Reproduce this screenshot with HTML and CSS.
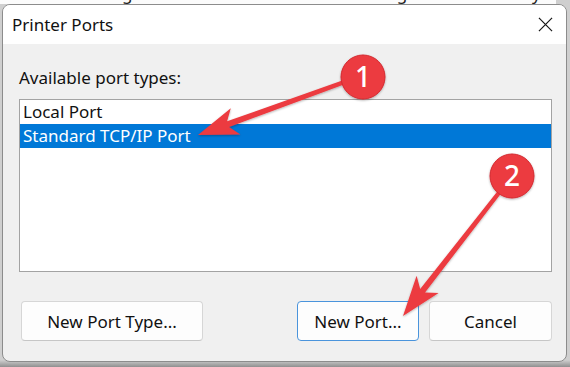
FILE: index.html
```html
<!DOCTYPE html>
<html lang="en">
<head>
    <meta charset="UTF-8">
    <title>Printer Ports</title>
    <link rel="stylesheet" href="styles.css">
</head>
<body>
    <div class="behind">
        <div class="tabs">
            <span class="tab t-general">General</span>
            <span class="tab t-sharing">Sharing</span>
            <span class="tab t-advanced">Advanced</span>
            <span class="tab t-color">Color Management</span>
            <span class="tab t-security">Security</span>
        </div>
    </div>

    <div class="dialog">
        <div class="titlebar">
            <span class="title">Printer Ports</span>
            <svg class="close" viewBox="0 0 16 16" width="16" height="16">
                <path d="M1 1 L15 15 M15 1 L1 15" stroke="#1a1a1a" stroke-width="1.3" fill="none"/>
            </svg>
        </div>

        <div class="content">
            <div class="label">Available port types:</div>
            <div class="listbox">
                <div class="item">Local Port</div>
                <div class="item selected">Standard TCP/IP Port</div>
            </div>
            <div class="buttons">
                <button class="btn btn-type">New Port Type...</button>
                <div class="spacer"></div>
                <button class="btn btn-default">New Port...</button>
                <button class="btn btn-cancel">Cancel</button>
            </div>
        </div>
    </div>

    <!-- red call-outs drawn on top of the screenshot -->
    <svg class="callouts" viewBox="0 0 570 367" width="570" height="367">
        <defs>
            <filter id="shade" x="-20%" y="-20%" width="140%" height="140%">
                <feDropShadow dx="0" dy="1" stdDeviation="1" flood-color="#000" flood-opacity="0.3"/>
            </filter>
        </defs>
        <g fill="#ec3a3f" filter="url(#shade)">
            <polygon points="198,135 240.4,134.6 229.1,126.9 350.7,81.9 349.3,78.1 227.1,121.3 230.8,108.2"/>
            <polygon points="403,316 438.6,293 425,292.6 506.6,186.2 503.4,183.8 420.2,289 416.6,275.8"/>
            <circle cx="363" cy="77" r="22" stroke="#d42a30" stroke-width="1"/>
            <circle cx="512" cy="176" r="22" stroke="#d42a30" stroke-width="1"/>
        </g>
        <text x="363" y="87" class="num">1</text>
        <text x="512" y="186" class="num">2</text>
    </svg>
</body>
</html>
```

FILE: styles.css
```css
* {
    margin: 0;
    padding: 0;
    box-sizing: border-box;
    font-family: 'Noto Sans', 'Open Sans', sans-serif;
}

body {
    width: 570px;
    height: 367px;
    overflow: hidden;
    background: linear-gradient(to bottom, #cfcfcf 0, #cfcfcf 360px, #8f8f8f 367px);
    position: relative;
}

/* window behind the dialog, only its tab labels peek out */
.behind {
    height: 4px;
    margin-right: 14px;
    background: #fbfbfb;
    overflow: hidden;
}

.tabs {
    display: flex;
    margin-top: -15px;
    font-size: 17px;
    line-height: 18px;
    color: #222;
}

.t-general { margin-left: -8px; }
.t-sharing { margin-left: 16px; }
.t-advanced { margin-left: 76px; }
.t-color { margin-left: 18px; }
.t-security { margin-left: 18px; }

.dialog {
    width: 565px;
    height: 358px;
    margin-left: 2px;
    border: 1px solid #8c8c8c;
    border-radius: 8px;
    overflow: hidden;
    background: #f0f0f0;
    display: flex;
    flex-direction: column;
}

.titlebar {
    height: 39px;
    background: #fff;
    display: flex;
    align-items: center;
    justify-content: space-between;
    padding: 0 13px 0 9px;
}

.title {
    font-size: 17px;
    color: #111;
}

.close {
    display: block;
    width: 15px;
    height: 15px;
}

.content {
    flex: 1;
    padding: 22px 14px 0 16px;
}

.label {
    font-size: 17px;
    line-height: 24px;
    color: #111;
    margin-bottom: 9px;
}

.listbox {
    width: 533px;
    height: 173px;
    background: #fff;
    border: 1px solid #a3a3a3;
}

.item {
    height: 24px;
    line-height: 24px;
    padding-left: 3px;
    font-size: 17px;
    color: #111;
}

.item.selected {
    background: #0078d7;
    color: #fff;
}

.buttons {
    display: flex;
    gap: 10px;
    margin-top: 29px;
    padding-left: 2px;
}

.spacer {
    flex: 1;
}

.btn {
    height: 40px;
    background: #fdfdfd;
    border: 1px solid #d6d6d6;
    border-bottom-color: #c6c6c6;
    border-radius: 4px;
    font-size: 17px;
    color: #111;
}

.btn-type { width: 182px; }
.btn-default { width: 122px; border-color: #4a94dc; }
.btn-cancel { width: 123px; }

.callouts {
    position: absolute;
    left: 0;
    top: 0;
}

.num {
    fill: #fff;
    font-size: 28px;
    font-weight: 500;
    text-anchor: middle;
}
```
